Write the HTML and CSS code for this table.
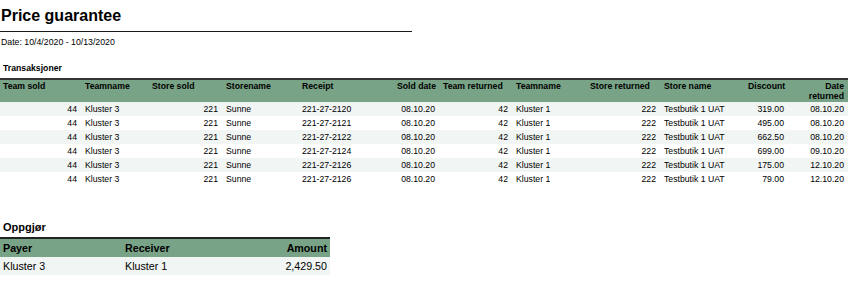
FILE: index.html
```html
<!DOCTYPE html>
<html>
<head>
<meta charset="utf-8">
<link rel="stylesheet" href="styles.css">
</head>
<body>
<div class="page">
  <h1 class="title">Price guarantee</h1>
  <div class="rule"></div>
  <div class="date">Date: 10/4/2020 - 10/13/2020</div>

  <div class="section-title">Transaksjoner</div>
  <table class="tx">
    <colgroup>
      <col class="c1"><col class="c2"><col class="c3"><col class="c4"><col class="c5"><col class="c6">
      <col class="c7"><col class="c8"><col class="c9"><col class="c10"><col class="c11"><col class="c12">
    </colgroup>
    <thead>
      <tr>
        <th class="first">Team sold</th>
        <th>Teamname</th>
        <th>Store sold</th>
        <th>Storename</th>
        <th>Receipt</th>
        <th class="r">Sold date</th>
        <th>Team returned</th>
        <th>Teamname</th>
        <th>Store returned</th>
        <th>Store name</th>
        <th class="r">Discount</th>
        <th class="r">Date<br>returned</th>
      </tr>
    </thead>
    <tbody>
      <tr><td class="r">44</td><td>Kluster 3</td><td class="r">221</td><td>Sunne</td><td>221-27-2120</td><td class="r">08.10.20</td><td class="r">42</td><td>Kluster 1</td><td class="r">222</td><td>Testbutik 1 UAT</td><td class="r">319.00</td><td class="r">08.10.20</td></tr>
      <tr><td class="r">44</td><td>Kluster 3</td><td class="r">221</td><td>Sunne</td><td>221-27-2121</td><td class="r">08.10.20</td><td class="r">42</td><td>Kluster 1</td><td class="r">222</td><td>Testbutik 1 UAT</td><td class="r">495.00</td><td class="r">08.10.20</td></tr>
      <tr><td class="r">44</td><td>Kluster 3</td><td class="r">221</td><td>Sunne</td><td>221-27-2122</td><td class="r">08.10.20</td><td class="r">42</td><td>Kluster 1</td><td class="r">222</td><td>Testbutik 1 UAT</td><td class="r">662.50</td><td class="r">08.10.20</td></tr>
      <tr><td class="r">44</td><td>Kluster 3</td><td class="r">221</td><td>Sunne</td><td>221-27-2124</td><td class="r">08.10.20</td><td class="r">42</td><td>Kluster 1</td><td class="r">222</td><td>Testbutik 1 UAT</td><td class="r">699.00</td><td class="r">09.10.20</td></tr>
      <tr><td class="r">44</td><td>Kluster 3</td><td class="r">221</td><td>Sunne</td><td>221-27-2126</td><td class="r">08.10.20</td><td class="r">42</td><td>Kluster 1</td><td class="r">222</td><td>Testbutik 1 UAT</td><td class="r">175.00</td><td class="r">12.10.20</td></tr>
      <tr><td class="r">44</td><td>Kluster 3</td><td class="r">221</td><td>Sunne</td><td>221-27-2126</td><td class="r">08.10.20</td><td class="r">42</td><td>Kluster 1</td><td class="r">222</td><td>Testbutik 1 UAT</td><td class="r">79.00</td><td class="r">12.10.20</td></tr>
    </tbody>
  </table>

  <div class="section-title big">Oppgjør</div>
  <table class="settle">
    <colgroup><col class="s1"><col class="s2"><col class="s3"></colgroup>
    <thead>
      <tr><th>Payer</th><th>Receiver</th><th class="r">Amount</th></tr>
    </thead>
    <tbody>
      <tr><td>Kluster 3</td><td>Kluster 1</td><td class="r">2,429.50</td></tr>
    </tbody>
  </table>
</div>
</body>
</html>
```
FILE: styles.css
```css
html, body {
  margin: 0;
  padding: 0;
  background: #ffffff;
}

body {
  font-family: "Liberation Sans", Arial, sans-serif;
  color: #000000;
}

.page {
  display: flex;
  flex-direction: column;
  align-items: flex-start;
}

.title {
  margin: 6px 0 0 1px;
  font-size: 16px;
  line-height: 20px;
  font-weight: bold;
}

.rule {
  margin-top: 5px;
  width: 412px;
  height: 1px;
  background: #1a1a1a;
}

.date {
  margin: 5px 0 0 1px;
  font-size: 8.75px;
  line-height: 11px;
}

.section-title {
  margin: 15px 0 0 3px;
  font-size: 8.7px;
  line-height: 11px;
  font-weight: bold;
}

.section-title.big {
  margin-top: 35px;
  font-size: 11px;
  line-height: 13px;
}

table {
  border-collapse: collapse;
  table-layout: fixed;
}

.tx {
  margin-top: 4px;
  width: 848px;
  font-size: 8.7px;
  border-top: 2px solid #333333;
}

.c1 { width: 81px; }
.c2 { width: 67px; }
.c3 { width: 74px; }
.c4 { width: 76px; }
.c5 { width: 95px; }
.c6 { width: 46px; }
.c7 { width: 73px; }
.c8 { width: 74px; }
.c9 { width: 74px; }
.c10 { width: 84px; }
.c11 { width: 44px; }
.c12 { width: 60px; }

.tx th {
  background: #78a386;
  font-weight: bold;
  text-align: left;
  vertical-align: top;
  height: 22px;
  line-height: 10.5px;
  padding: 0.5px 4px 0.5px 4px;
  white-space: nowrap;
  box-sizing: border-box;
}

.tx th.first,
.tx td:first-child {
  padding-left: 3px;
}

.tx td {
  height: 14px;
  line-height: 14px;
  padding: 0 4px;
  white-space: nowrap;
  box-sizing: border-box;
}

.tx tbody tr:nth-child(odd) td {
  background: #f1f5f4;
}

.r {
  text-align: right !important;
}

.settle {
  margin-top: 3px;
  width: 330px;
  font-size: 10.7px;
  border-top: 2px solid #222222;
}

.s1 { width: 122px; }
.s2 { width: 108px; }
.s3 { width: 100px; }

.settle th {
  background: #78a386;
  text-align: left;
  font-weight: bold;
  height: 18px;
  line-height: 18px;
  padding: 0 3px;
  box-sizing: border-box;
}

.settle td {
  background: #f1f5f4;
  height: 18px;
  line-height: 18px;
  padding: 0 3px;
  box-sizing: border-box;
}
```
